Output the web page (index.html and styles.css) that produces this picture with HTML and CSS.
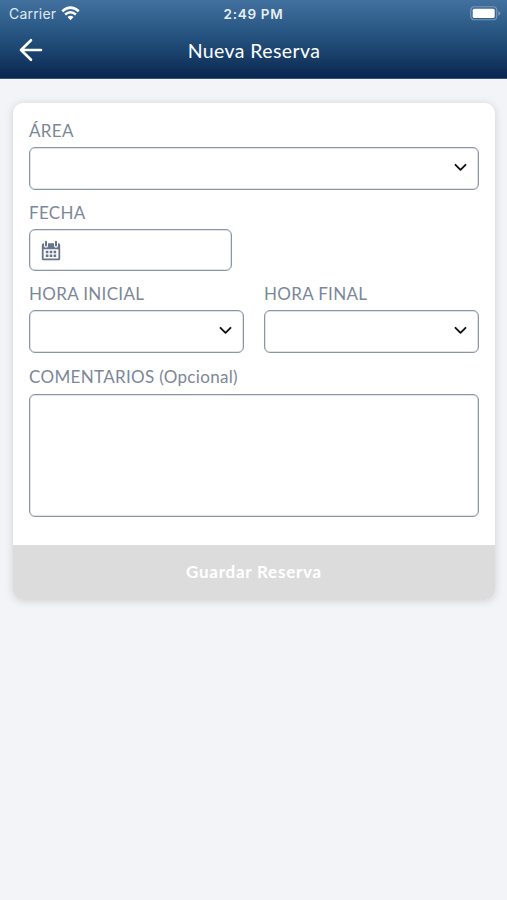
FILE: index.html
```html
<!DOCTYPE html>
<html lang="es">
<head>
<meta charset="utf-8">
<title>Nueva Reserva</title>
<link rel="stylesheet" href="styles.css">
</head>
<body>
<header class="header">
  <div class="status">
    <div class="carrier"><span>Carrier</span>
      <svg width="19" height="15" viewBox="0 0 19 15" fill="none" stroke="#fff" stroke-width="2.5"><path d="M1.2 5.2Q9.5-2 17.8 5.2"/><path d="M4.1 8.5Q9.5 3.9 14.9 8.5"/><path d="M9.5 14.2 6.5 11.1Q9.5 8.6 12.5 11.1Z" fill="#fff" stroke="none"/></svg>
    </div>
    <span class="clock">2:49 PM</span>
    <svg class="battery" width="31" height="15" viewBox="0 0 31 15"><rect x=".75" y=".75" width="26" height="13" rx="3.5" fill="none" stroke="#7897b7" stroke-width="1.2"/><rect x="2.7" y="2.7" width="22" height="9.2" rx="1.5" fill="#fff"/><path d="M28.3 5v4.8q2-1 2-2.4t-2-2.4z" fill="#7897b7"/></svg>
  </div>
  <nav class="nav">
    <svg width="26" height="26" viewBox="0 0 26 26" fill="none" stroke="#fff" stroke-width="2.6" stroke-linecap="round" stroke-linejoin="round"><path d="M13 3.2 3 13 13 22.8M3 13H23"/></svg>
    <h1>Nueva Reserva</h1>
  </nav>
</header>
<main class="card">
  <form class="form">
    <div class="field">
      <label>ÁREA</label>
      <div class="box select"><svg width="13" height="9" viewBox="0 0 13 9"><path d="M1.5 1.8 6.5 6.8l5-5"/></svg></div>
    </div>
    <div class="field date">
      <label>FECHA</label>
      <div class="box">
        <svg class="calendar" width="20" height="21" viewBox="0 0 20 21"><path fill="#65768c" fill-rule="evenodd" d="M2.5 3.2h15q1.7 0 1.7 1.7v13.8q0 1.6-1.7 1.6h-15q-1.7 0-1.7-1.6V4.9q0-1.7 1.7-1.7zM2.6 9.2v9.4h14.8V9.2z"/><path d="M5 1.7v4M15 1.7v4" stroke="#fff" stroke-width="4" stroke-linecap="round"/><path d="M5 1.7v3.8M15 1.7v3.8" stroke="#65768c" stroke-width="2" stroke-linecap="round"/><path d="M4.8 12h2.6M8.7 12h2.6M12.6 12h2.6M4.8 15.8h2.6M8.7 15.8h2.6M12.6 15.8h2.6" stroke="#65768c" stroke-width="2.6"/></svg>
      </div>
    </div>
    <div class="row">
      <div class="field">
        <label>HORA INICIAL</label>
        <div class="box select"><svg width="13" height="9" viewBox="0 0 13 9"><path d="M1.5 1.8 6.5 6.8l5-5"/></svg></div>
      </div>
      <div class="field">
        <label>HORA FINAL</label>
        <div class="box select"><svg width="13" height="9" viewBox="0 0 13 9"><path d="M1.5 1.8 6.5 6.8l5-5"/></svg></div>
      </div>
    </div>
    <div class="field comments">
      <label>COMENTARIOS (Opcional)</label>
      <div class="box notes"></div>
    </div>
  </form>
  <button class="save" disabled>Guardar Reserva</button>
</main>
</body>
</html>
```
FILE: styles.css
```css
* { box-sizing: border-box; }
body {
  margin: 0;
  min-height: 900px;
  background: #f2f4f8;
  font-family: Lato, "Liberation Sans", sans-serif;
}
svg { display: block; flex: none; }
.header {
  height: 79px;
  color: #fff;
  background: linear-gradient(#43719f 0%, #2b5a87 35%, #1c4470 65%, #0b2850 98%);
  border-bottom: 1px solid #33577f;
}
.status {
  height: 27px;
  padding: 0 6px 0 9px;
  display: grid;
  grid-template-columns: 1fr auto 1fr;
  align-items: center;
  font: 14px/26px Inter, sans-serif;
}
.carrier { display: flex; align-items: center; gap: 5px; color: #dfe9f3; letter-spacing: .2px; }
.clock {
  margin-right: 3px;
  font-weight: 600;
  font-size: 13.5px;
  letter-spacing: .7px;
  color: #e6eef6;
}
.battery { justify-self: end; }
.nav {
  height: 46px;
  padding: 0 18px;
  display: grid;
  grid-template-columns: 26px 1fr 26px;
  align-items: center;
}
.nav h1 {
  margin: 0 0 0 1px;
  padding-top: 2px;
  text-align: center;
  font-size: 19.5px;
  line-height: 24px;
  font-weight: 400;
  letter-spacing: .4px;
}
.card {
  margin: 24px 12px 0 13px;
  border-radius: 10px;
  overflow: hidden;
  background: #fff;
  box-shadow: 0 1px 8px rgba(0, 0, 0, .15);
}
.form {
  height: 442px;
  padding: 15px 16px 0;
  display: flex;
  flex-direction: column;
  gap: 10px;
}
.field { display: flex; flex-direction: column; }
.field label {
  height: 29px;
  padding-top: 2px;
  line-height: 22px;
  font-size: 17px;
  letter-spacing: .33px;
  color: #7c8798;
  white-space: nowrap;
}
.box {
  height: 43px;
  border: 1px solid #8a95a6;
  border-radius: 6px;
  background: #fff;
  box-shadow: inset 0 0 0 .5px #c1c8d2;
}
.select { display: flex; align-items: center; justify-content: flex-end; padding: 0 11px 3px 0; }
.select path { fill: none; stroke: #111; stroke-width: 1.9; stroke-linecap: round; stroke-linejoin: round; }
.date { width: 203px; }
.date .box { height: 42px; padding: 10px 11px; }
.row { display: grid; grid-template-columns: 1fr 1fr; gap: 20px; }
.comments label { height: 31px; padding-top: 3px; }
.notes { height: 123px; }
.save {
  display: block;
  width: 100%;
  height: 55px;
  padding: 0 0 2px;
  border: 0;
  background: #dcdcdc;
  color: #fff;
  font: 700 17px/24px Lato, sans-serif;
  letter-spacing: .75px;
}
```
